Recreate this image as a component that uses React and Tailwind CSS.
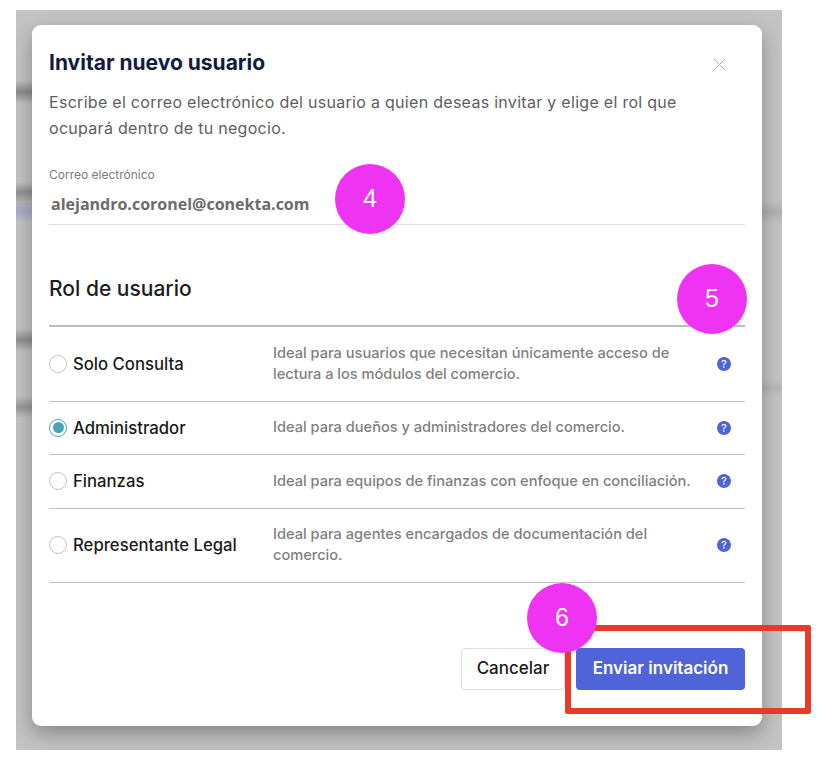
import React from 'react';
import { X } from 'lucide-react';
import { BsQuestionCircleFill } from 'react-icons/bs';

const roles = [
  { name: 'Solo Consulta', desc: 'Ideal para usuarios que necesitan únicamente acceso de lectura a los módulos del comercio.' },
  { name: 'Administrador', desc: 'Ideal para dueños y administradores del comercio.', selected: true },
  { name: 'Finanzas', desc: 'Ideal para equipos de finanzas con enfoque en conciliación.' },
  { name: 'Representante Legal', desc: 'Ideal para agentes encargados de documentación del comercio.' },
];

function Radio({ selected }) {
  if (selected) {
    return (
      <span className="flex h-[18px] w-[18px] shrink-0 items-center justify-center rounded-full border border-[#4aa3b8] bg-white">
        <span className="h-[11px] w-[11px] rounded-full bg-[#4aa3b8]" />
      </span>
    );
  }
  return <span className="h-[18px] w-[18px] shrink-0 rounded-full border border-[#c4c4c4] bg-white" />;
}

function Step({ className, children }) {
  return (
    <div className={`absolute flex h-[70px] w-[70px] items-center justify-center rounded-full bg-[#ee33f2] font-['Liberation_Sans',sans-serif] text-[25px] text-white ${className}`}>
      {children}
    </div>
  );
}

export default function App() {
  return (
    <div className="relative h-[772px] w-[822px] overflow-hidden bg-white font-['Inter',sans-serif]">
      <div className="ml-4 mt-[10px] flex h-[740px] w-[766px] overflow-hidden bg-[#c3c3c3]">
        {/* fondo borroso detras del modal */}
        <div className="h-full w-4 shrink-0 bg-[linear-gradient(to_bottom,#c3c3c3_70px,#8a8a8a_82px,#c3c3c3_94px,#c3c3c3_172px,#909090_182px,#b4b4b4_192px,#a8abc8_202px,#c3c3c3_212px,#c3c3c3_318px,#8f8f8f_330px,#c3c3c3_342px,#c3c3c3_386px,#969696_397px,#c3c3c3_408px)]" />

        <div className="relative mt-[15px] h-[701px] w-[730px] shrink-0 rounded-[9px] bg-white px-[17px] pt-[25px] shadow-[0_8px_20px_rgba(0,0,0,0.3)]">
          <div className="flex items-start justify-between">
            <h1 className="text-[21px] font-bold leading-[26px] text-[#14193f]">Invitar nuevo usuario</h1>
            <X size={21} strokeWidth={1.1} className="mr-[15px] mt-[4px] text-[#a8a8a8]" />
          </div>
          <p className="mt-[13px] text-[16px] leading-[26px] tracking-[0.29px] text-[#5e5e5e]">
            Escribe el correo electrónico del usuario a quien deseas invitar y elige el rol que<br />
            ocupará dentro de tu negocio.
          </p>

          <div className="mt-[26px] border-b border-[#dedede]">
            <div className="text-[12px] leading-[16px] text-[#7b7b7b]">Correo electrónico</div>
            <div className="pb-[11px] pl-[2px] pt-[12px] font-['Open_Sans',sans-serif] text-[16px] font-bold leading-[18px] text-[#6b6b6b]">
              alejandro.coronel@conekta.com
            </div>
          </div>

          <h2 className="mt-[51px] text-[21px] font-medium leading-[26px] text-[#1c1c1c]">Rol de usuario</h2>

          <div className="mt-[23px] border-t-2 border-[#bdbdbd]">
            {roles.map((role) => (
              <div key={role.name} className="flex items-center border-b border-[#bfbfbf] py-[15.75px]">
                <div className="flex w-[224px] shrink-0 items-center gap-[6px]">
                  <Radio selected={role.selected} />
                  <span className="text-[16.7px] font-medium leading-[20px] text-[#1a1a1a]">{role.name}</span>
                </div>
                <p className="w-[426px] text-[14.6px] font-medium leading-[21px] text-[#808080]">{role.desc}</p>
                <BsQuestionCircleFill size={14} className="ml-[18px] text-[#4f64d8]" />
              </div>
            ))}
          </div>

          <div className="mt-[65px] flex justify-end gap-[11px]">
            <button className="h-[42px] w-[104px] rounded-[4px] border border-[#dcdcdc] bg-white text-[17px] font-medium text-[#1a1a1a]">Cancelar</button>
            <button className="h-[42px] w-[169px] rounded-[4px] bg-[#4f64d8] text-[17px] font-semibold text-white">Enviar invitación</button>
          </div>
        </div>

        <div className="h-full w-5 shrink-0 bg-[linear-gradient(to_bottom,#c3c3c3_190px,#b0b0b0_202px,#c3c3c3_214px,#c3c3c3_370px,#b6b6b6_378px,#c3c3c3_386px)]" />
      </div>

      {/* anotaciones encima de la captura */}
      <div className="absolute left-[565px] top-[625px] h-[89px] w-[246px] rounded-[2px] border-[6px] border-[#e8392a]" />
      <Step className="left-[335px] top-[164px]">4</Step>
      <Step className="left-[677px] top-[264px]">5</Step>
      <Step className="left-[527px] top-[583px]">6</Step>
    </div>
  );
}
